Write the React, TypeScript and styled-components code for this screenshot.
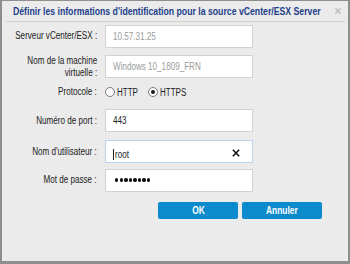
import styled, { createGlobalStyle } from "styled-components";

const GlobalStyle = createGlobalStyle`
  html, body {
    margin: 0;
    padding: 0;
    background: #8e8e8e;
    font-family: "Liberation Sans", Arial, sans-serif;
  }
`;

const Page = styled.div`
  width: 350px;
  height: 264px;
  box-sizing: border-box;
  padding: 1px 2px 3px 2px;
  background: #8e8e8e;
`;

const Dialog = styled.div`
  height: 100%;
  box-sizing: border-box;
  background: #ebebeb;
  display: flex;
  flex-direction: column;
  padding: 0 3px 0 4px;
`;

// text squeezed horizontally, the dialog uses a narrow face
const Narrow = styled.span<{ $k?: number; $origin?: string }>`
  display: inline-block;
  flex: none;
  white-space: nowrap;
  transform: scaleX(${(p) => p.$k ?? 0.81});
  transform-origin: ${(p) => p.$origin ?? "left"} center;
`;

const TitleBar = styled.div`
  height: 20px;
  display: flex;
  align-items: center;
  justify-content: space-between;
  border-bottom: 1px solid #d0d0d0;
  padding: 0 4px 0 7px;
`;

const Title = styled.div`
  flex: 1;
  min-width: 0;
  font-size: 10px;
  font-weight: bold;
  color: #233f8c;
`;

const CloseIcon = styled.svg`
  flex: none;
  width: 6px;
  height: 6px;
`;

const Form = styled.div`
  display: flex;
  flex-direction: column;
`;

const Row = styled.div<{ $h: number }>`
  display: grid;
  grid-template-columns: 91px 148px;
  column-gap: 8px;
  align-items: center;
  height: ${(p) => p.$h}px;
`;

const Label = styled.label`
  display: flex;
  justify-content: flex-end;
  font-size: 10px;
  color: #222;
  text-align: right;
  line-height: 11.5px;
`;

const Input = styled.div<{ $focus?: boolean }>`
  height: 23px;
  box-sizing: border-box;
  background: #fff;
  border: 1px solid ${(p) => (p.$focus ? "#b8d3ef" : "#d2d2d2")};
  display: flex;
  align-items: center;
  justify-content: space-between;
  padding: 0 12px 0 7px;
  font-size: 10px;
`;

const Value = styled.span<{ $muted?: boolean; $low?: boolean }>`
  display: flex;
  align-items: center;
  color: ${(p) => (p.$muted ? "#9b9b9b" : "#222")};
  margin-top: ${(p) => (p.$low ? "5px" : "0")};
`;

const Caret = styled.span`
  width: 1px;
  height: 11px;
  background: #222;
  margin-right: 1px;
`;

const Dots = styled.span`
  display: flex;
  gap: 1.2px;
  margin-left: 2px;
`;

const Dot = styled.span`
  width: 3.4px;
  height: 3.4px;
  border-radius: 50%;
  background: #111;
`;

const Radios = styled.div`
  display: flex;
  align-items: center;
  gap: 5px;
  font-size: 10px;
  color: #222;
`;

const RadioItem = styled.span`
  display: flex;
  align-items: center;
  gap: 2px;
`;

const Circle = styled.span<{ $on?: boolean }>`
  width: 10px;
  height: 10px;
  box-sizing: border-box;
  border-radius: 50%;
  border: 1px solid #7a7a7a;
  background: #fff;
  display: flex;
  align-items: center;
  justify-content: center;
  &::after {
    content: "";
    width: 4px;
    height: 4px;
    border-radius: 50%;
    background: ${(p) => (p.$on ? "#1a1a1a" : "transparent")};
  }
`;

const Buttons = styled.div`
  display: flex;
  justify-content: flex-end;
  gap: 4px;
  padding: 2px 23px 0 0;
`;

const Button = styled.button`
  width: 80px;
  height: 17px;
  border: none;
  border-radius: 2px;
  background: #0b8bcc;
  color: #fff;
  font-family: inherit;
  font-weight: bold;
  font-size: 10px;
  padding: 0;
  display: flex;
  align-items: center;
  justify-content: center;
`;

const ClearIcon = styled.svg`
  width: 8px;
  height: 8px;
  margin-top: 2px;
`;

export default function App() {
  return (
    <>
      <GlobalStyle />
      <Page>
        <Dialog>
          <TitleBar>
            <Title>
              <Narrow $k={0.87}>Définir les informations d'identification pour la source vCenter/ESX Server</Narrow>
            </Title>
            <CloseIcon viewBox="0 0 6 6">
              <path d="M0.5 0.5 L5.5 5.5 M5.5 0.5 L0.5 5.5" stroke="#b9b9b9" strokeWidth="1.4" />
            </CloseIcon>
          </TitleBar>
          <Form>
            <Row $h={28}>
              <Label>
                <Narrow $origin="right">Serveur vCenter/ESX :</Narrow>
              </Label>
              <Input>
                <Value $muted>
                  <Narrow>10.57.31.25</Narrow>
                </Value>
              </Input>
            </Row>
            <Row $h={33}>
              <Label>
                <Narrow $origin="right">
                  Nom de la machine
                  <br />
                  virtuelle :
                </Narrow>
              </Label>
              <Input>
                <Value $muted>
                  <Narrow>Windows 10_1809_FRN</Narrow>
                </Value>
              </Input>
            </Row>
            <Row $h={18}>
              <Label>
                <Narrow $origin="right">Protocole :</Narrow>
              </Label>
              <Radios>
                <RadioItem>
                  <Circle />
                  <Narrow $k={0.8}>HTTP</Narrow>
                </RadioItem>
                <RadioItem>
                  <Circle $on />
                  <Narrow $k={0.8}>HTTPS</Narrow>
                </RadioItem>
              </Radios>
            </Row>
            <Row $h={39}>
              <Label>
                <Narrow $origin="right">Numéro de port :</Narrow>
              </Label>
              <Input>
                <Value>
                  <Narrow>443</Narrow>
                </Value>
              </Input>
            </Row>
            <Row $h={20}>
              <Label>
                <Narrow $origin="right">Nom d'utilisateur :</Narrow>
              </Label>
              <Input $focus>
                <Value $low>
                  <Caret />
                  <Narrow>root</Narrow>
                </Value>
                <ClearIcon viewBox="0 0 8 8">
                  <path d="M0.8 0.8 L7.2 7.2 M7.2 0.8 L0.8 7.2" stroke="#111" strokeWidth="1.5" />
                </ClearIcon>
              </Input>
            </Row>
            <Row $h={40}>
              <Label>
                <Narrow $origin="right">Mot de passe :</Narrow>
              </Label>
              <Input>
                <Dots>
                  {Array.from({ length: 8 }, (_, i) => (
                    <Dot key={i} />
                  ))}
                </Dots>
              </Input>
            </Row>
          </Form>
          <Buttons>
            <Button>
              <Narrow $k={0.84} $origin="center">OK</Narrow>
            </Button>
            <Button>
              <Narrow $k={0.84} $origin="center">Annuler</Narrow>
            </Button>
          </Buttons>
        </Dialog>
      </Page>
    </>
  );
}
